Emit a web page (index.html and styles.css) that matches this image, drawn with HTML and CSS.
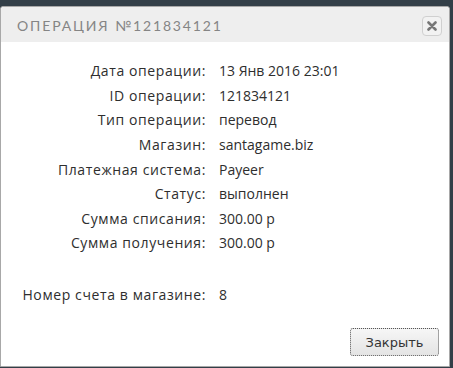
FILE: index.html
```html
<!DOCTYPE html>
<html>
<head>
<meta charset="utf-8">
<link rel="stylesheet" href="styles.css">
</head>
<body>
<div class="dialog">
  <div class="header">
    <span class="title">Операция №121834121</span>
    <button class="close" aria-label="close">
      <svg width="10" height="10" viewBox="0 0 10 10"><path d="M1.5 1.5 L8.5 8.5 M8.5 1.5 L1.5 8.5" stroke="#777" stroke-width="2.6" stroke-linecap="round"/></svg>
    </button>
  </div>
  <div class="content">
    <table class="info">
      <tr><td class="lbl">Дата операции:</td><td class="val">13 Янв 2016 23:01</td></tr>
      <tr><td class="lbl">ID операции:</td><td class="val">121834121</td></tr>
      <tr><td class="lbl">Тип операции:</td><td class="val">перевод</td></tr>
      <tr><td class="lbl">Магазин:</td><td class="val">santagame.biz</td></tr>
      <tr><td class="lbl">Платежная система:</td><td class="val">Payeer</td></tr>
      <tr><td class="lbl">Статус:</td><td class="val">выполнен</td></tr>
      <tr><td class="lbl">Сумма списания:</td><td class="val">300.00 р</td></tr>
      <tr><td class="lbl">Сумма получения:</td><td class="val">300.00 р</td></tr>
      <tr class="blank"><td></td><td></td></tr>
      <tr><td class="lbl">Номер счета в магазине:</td><td class="val">8</td></tr>
    </table>
  </div>
  <div class="footer">
    <button class="btn">Закрыть</button>
  </div>
</div>
</body>
</html>
```
FILE: styles.css
```css
html, body {
  margin: 0;
  padding: 0;
  background: #333f48;
  height: 368px;
  overflow: hidden;
}
.dialog {
  margin-top: 6px;
  width: 448px;
  height: 359px;
  background: #fff;
  border: 1px solid #a8a8a8;
  border-radius: 3px 3px 0 0;
  display: flex;
  flex-direction: column;
  font-family: "Open Sans", "Noto Sans", sans-serif;
  color: #2e2e2e;
}
.header {
  height: 35px;
  background: #eeeeee;
  display: flex;
  align-items: center;
  justify-content: space-between;
  padding: 0 7px 0 16px;
  border-radius: 3px 3px 0 0;
}
.title {
  font-family: Lato, sans-serif;
  text-transform: uppercase;
  font-size: 14px;
  letter-spacing: 1.85px;
  color: #858585;
  padding-top: 1px;
}
.close {
  width: 20px;
  height: 20px;
  padding: 0;
  border: 1px solid #d0d0d0;
  border-radius: 4px;
  background: #f2f2f2;
  display: flex;
  align-items: center;
  justify-content: center;
  margin-top: 2px;
}
.content {
  flex: 1;
  padding-top: 17px;
}
.info {
  border-collapse: collapse;
  font-size: 14px;
}
.info td {
  height: 24.6px;
  padding: 0;
  line-height: 16px;
}
.lbl {
  width: 205px;
  text-align: right;
  letter-spacing: 0.6px;
}
.val {
  padding-left: 13px !important;
  letter-spacing: 0;
}
.blank td {
  height: 27px;
}
.footer {
  display: flex;
  justify-content: flex-end;
  padding: 0 10px 10px 0;
}
.btn {
  font-family: "DejaVu Sans", Verdana, sans-serif;
  font-size: 13px;
  color: #333;
  height: 28px;
  width: 89px;
  border: 1px dotted #555;
  border-radius: 3px;
  background: linear-gradient(#f6f6f6, #e4e4e4);
  padding: 0;
}
```
